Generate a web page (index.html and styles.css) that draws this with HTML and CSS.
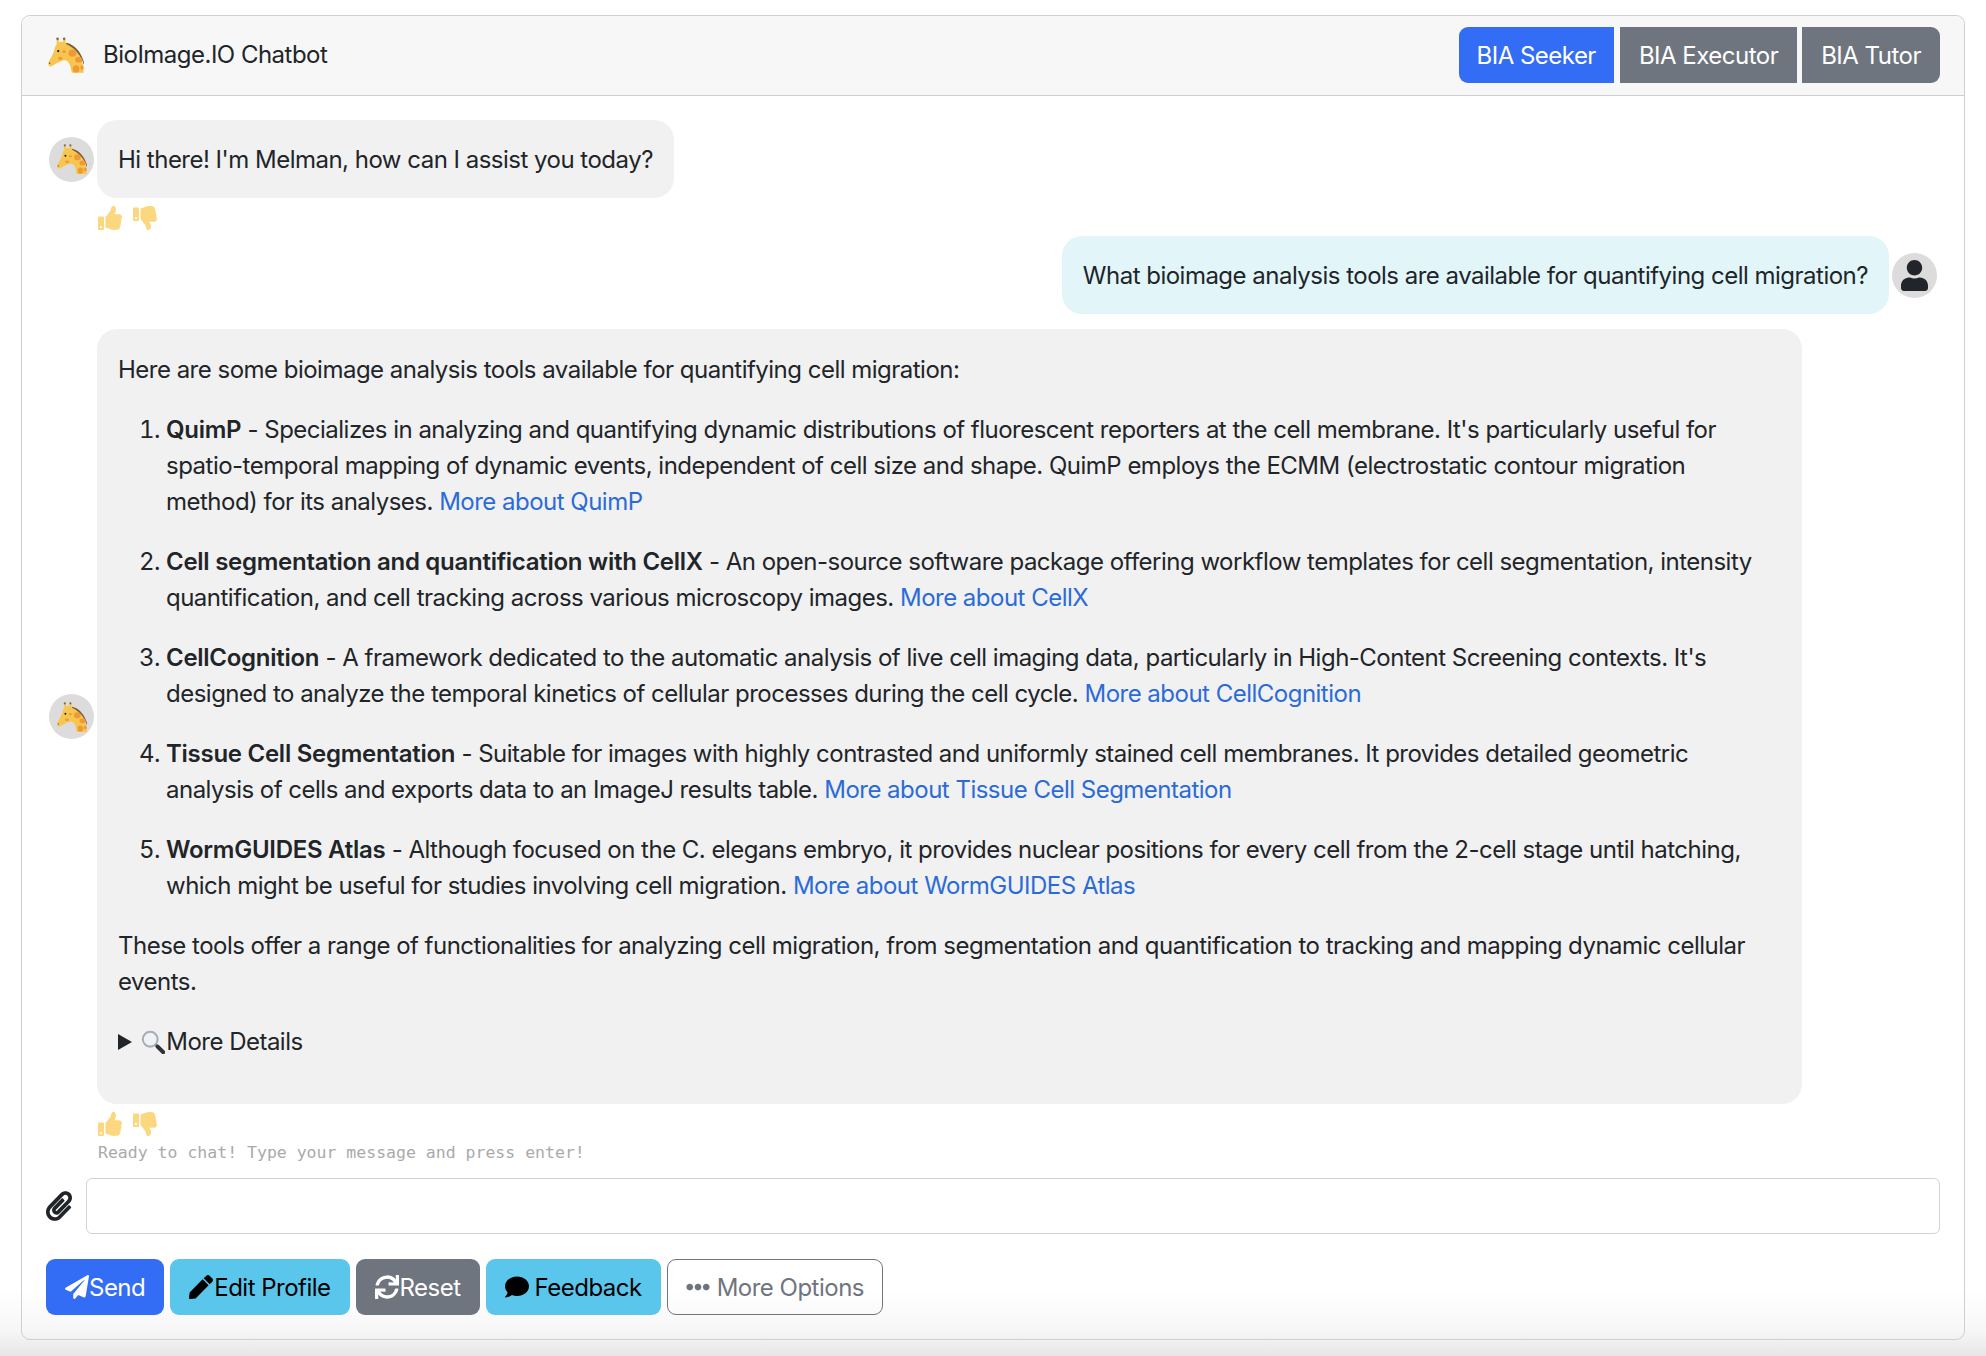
FILE: index.html
```html
<!DOCTYPE html>
<html lang="en">
<head>
  <meta charset="UTF-8">
  <title>BioImage.IO Chatbot</title>
  <link rel="stylesheet" href="styles.css">
</head>
<body>
  <svg class="defs" width="0" height="0">
    <symbol id="giraffe" viewBox="20 24 112 108">
      <path fill="#f8c550" d="M49 32h7v12h-7zM69 32h7v10h-7z"/>
      <circle fill="#8a6a3c" cx="52" cy="29" r="4"/>
      <circle fill="#8a6a3c" cx="72" cy="29" r="4"/>
      <path fill="#f8c550" d="M62 38l6 1 10 3c8 3 16 9 22 16 15 14 30 32 31 74H95c-3-20-7-35-20-38-10 0-25 8-37 16-8 5-15 2-14-8 2-8 14-25 18-38 2-12 8-24 20-26z"/>
      <path fill="#7b5a36" d="M78 41c24 5 44 25 54 59v8c-9-27-26-50-54-63z"/>
      <ellipse fill="#ee9b35" cx="97" cy="72" rx="12" ry="11"/>
      <ellipse fill="#ee9b35" cx="116" cy="92" rx="11" ry="9"/>
      <ellipse fill="#ee9b35" cx="108" cy="120" rx="10" ry="11"/>
      <ellipse fill="#ee9b35" cx="126" cy="116" rx="5" ry="7"/>
      <ellipse fill="#ee9b35" cx="72" cy="68" rx="6" ry="4"/>
      <ellipse fill="#ee9b35" cx="60" cy="88" rx="7" ry="5"/>
      <circle fill="#1d1d1d" cx="54" cy="66" r="3.5"/>
      <circle fill="#5c3d1c" cx="28" cy="103" r="2"/>
    </symbol>
    <symbol id="thumbs-up" viewBox="0 0 512 512">
      <path d="M104 224H24c-13.255 0-24 10.745-24 24v240c0 13.255 10.745 24 24 24h80c13.255 0 24-10.745 24-24V248c0-13.255-10.745-24-24-24zM64 472c-13.255 0-24-10.745-24-24s10.745-24 24-24 24 10.745 24 24-10.745 24-24 24zM384 81.452c0 42.416-25.97 66.208-33.277 94.548h101.723c33.397 0 59.397 27.746 59.553 58.098.084 17.938-7.546 37.249-19.439 49.197l-.11.11c9.836 23.337 8.237 56.037-9.308 79.469 8.681 25.895-.069 57.704-16.382 74.757 4.298 17.598 2.244 32.575-6.148 44.632C440.202 511.587 389.616 512 346.839 512l-2.845-.001c-48.287-.017-87.806-17.598-119.56-31.725-15.957-7.099-36.821-15.887-52.651-16.178-6.54-.12-11.783-5.457-11.783-11.998v-213.77c0-3.2 1.282-6.271 3.558-8.521 39.614-39.144 56.648-80.587 89.117-113.111 14.804-14.832 20.188-37.236 25.393-58.902C282.515 39.293 291.817 0 312 0c24 0 72 8 72 81.452z"/>
    </symbol>
    <symbol id="thumbs-down" viewBox="0 0 512 512">
      <path d="M0 56v240c0 13.255 10.745 24 24 24h80c13.255 0 24-10.745 24-24V56c0-13.255-10.745-24-24-24H24C10.745 32 0 42.745 0 56zm40 200c0-13.255 10.745-24 24-24s24 10.745 24 24-10.745 24-24 24-24-10.745-24-24zm272 256c-20.183 0-29.485-39.293-33.931-57.795-5.206-21.666-10.589-44.07-25.393-58.902-32.469-32.524-49.503-73.967-89.117-113.111a11.98 11.98 0 0 1-3.558-8.521V59.901c0-6.541 5.243-11.878 11.783-11.998 15.831-.29 36.694-9.079 52.651-16.178C256.189 17.598 295.709.017 343.995 0h2.844c42.777 0 93.363.413 113.774 29.737 8.392 12.057 10.446 27.034 6.148 44.632 16.312 17.053 25.063 48.863 16.382 74.757 17.544 23.432 19.143 56.132 9.308 79.469l.11.11c11.893 11.949 19.523 31.259 19.439 49.197-.156 30.352-26.157 58.098-59.553 58.098H350.723C358.03 364.34 384 388.132 384 430.548 384 504 336 512 312 512z"/>
    </symbol>
  </svg>

  <div class="chat-card">
    <header class="card-header">
      <div class="brand">
        <svg class="brand-logo"><use href="#giraffe"/></svg>
        <span>BioImage.IO Chatbot</span>
      </div>
      <div class="assistant-tabs">
        <button class="btn btn-primary tab-first">BIA Seeker</button>
        <button class="btn btn-secondary tab-middle">BIA Executor</button>
        <button class="btn btn-secondary tab-last">BIA Tutor</button>
      </div>
    </header>

    <main class="chat-area">
      <div class="message">
        <div class="avatar"><svg class="avatar-giraffe"><use href="#giraffe"/></svg></div>
        <div class="bubble">Hi there! I'm Melman, how can I assist you today?</div>
      </div>
      <div class="rating">
        <svg class="thumb"><use href="#thumbs-up"/></svg>
        <svg class="thumb"><use href="#thumbs-down"/></svg>
      </div>

      <div class="message message-user">
        <div class="bubble bubble-user">What bioimage analysis tools are available for quantifying cell migration?</div>
        <div class="avatar">
          <svg class="avatar-user" viewBox="0 0 448 512"><path d="M224 256c70.7 0 128-57.3 128-128S294.7 0 224 0 96 57.3 96 128s57.3 128 128 128zm89.6 32h-16.7c-22.2 10.2-46.9 16-72.9 16s-50.6-5.8-72.9-16h-16.7C60.2 288 0 348.2 0 422.4V464c0 26.5 21.5 48 48 48h352c26.5 0 48-21.5 48-48v-41.6c0-74.2-60.2-134.4-134.4-134.4z"/></svg>
        </div>
      </div>

      <div class="message">
        <div class="avatar"><svg class="avatar-giraffe"><use href="#giraffe"/></svg></div>
        <div class="bubble bubble-long">
          <p>Here are some bioimage analysis tools available for quantifying cell migration:</p>
          <ol>
            <li><p><strong>QuimP</strong> - Specializes in analyzing and quantifying dynamic distributions of fluorescent reporters at the cell membrane. It's particularly useful for spatio-temporal mapping of dynamic events, independent of cell size and shape. QuimP employs the ECMM (electrostatic contour migration method) for its analyses. <a href="#">More about QuimP</a></p></li>
            <li><p><strong>Cell segmentation and quantification with CellX</strong> - An open-source software package offering workflow templates for cell segmentation, intensity quantification, and cell tracking across various microscopy images. <a href="#">More about CellX</a></p></li>
            <li><p><strong>CellCognition</strong> - A framework dedicated to the automatic analysis of live cell imaging data, particularly in High-Content Screening contexts. It's designed to analyze the temporal kinetics of cellular processes during the cell cycle. <a href="#">More about CellCognition</a></p></li>
            <li><p><strong>Tissue Cell Segmentation</strong> - Suitable for images with highly contrasted and uniformly stained cell membranes. It provides detailed geometric analysis of cells and exports data to an ImageJ results table. <a href="#">More about Tissue Cell Segmentation</a></p></li>
            <li><p><strong>WormGUIDES Atlas</strong> - Although focused on the C. elegans embryo, it provides nuclear positions for every cell from the 2-cell stage until hatching, which might be useful for studies involving cell migration. <a href="#">More about WormGUIDES Atlas</a></p></li>
          </ol>
          <p>These tools offer a range of functionalities for analyzing cell migration, from segmentation and quantification to tracking and mapping dynamic cellular events.</p>
          <details class="more-details">
            <summary>
              <svg class="magnifier" viewBox="0 0 26 26">
                <circle cx="10" cy="10" r="8" fill="#eef3f7" stroke="#a9adb3" stroke-width="2.2"/>
                <path d="M16 16l2 2" stroke="#8c8f94" stroke-width="3"/>
                <path d="M18 18l6 6" stroke="#2f3338" stroke-width="4.5" stroke-linecap="round"/>
              </svg>More Details
            </summary>
          </details>
        </div>
      </div>
      <div class="rating">
        <svg class="thumb"><use href="#thumbs-up"/></svg>
        <svg class="thumb"><use href="#thumbs-down"/></svg>
      </div>
      <div class="status-line">Ready to chat! Type your message and press enter!</div>
    </main>

    <footer class="composer">
      <div class="input-row">
        <svg class="attach-icon" viewBox="0 0 448 512"><path d="M43.246 466.142c-58.43-60.289-57.341-157.511 1.386-217.581L254.392 34c44.316-45.332 116.351-45.336 160.671 0 43.89 44.894 43.943 117.329 0 162.276L232.214 383.128c-29.855 30.537-78.633 30.111-107.982-.998-28.275-29.97-27.368-77.473 1.452-106.953l143.743-146.835c6.182-6.314 16.312-6.422 22.626-.241l22.861 22.379c6.315 6.182 6.422 16.312.241 22.626L171.427 319.927c-4.932 5.045-5.236 13.428-.648 18.292 4.372 4.634 11.245 4.711 15.688.165l182.849-186.851c19.613-20.062 19.613-52.725-.011-72.798-19.189-19.627-49.957-19.637-69.154 0L90.39 293.295c-34.763 35.56-35.299 93.12-1.191 128.313 34.01 35.093 88.985 35.137 123.058.286l172.06-175.999c6.177-6.319 16.307-6.433 22.626-.256l22.877 22.364c6.319 6.177 6.434 16.307.256 22.626l-172.06 175.998c-59.576 60.938-155.943 60.216-214.77-.485z"/></svg>
        <input class="message-input" type="text">
      </div>
      <div class="action-row">
        <button class="btn btn-primary">
          <svg class="btn-icon" viewBox="0 0 512 512"><path d="M476 3.2L12.5 270.6c-18.1 10.4-15.8 35.6 2.2 43.2L121 358.4l287.3-253.2c5.5-4.9 13.3 2.6 8.6 8.3L176 407v80.5c0 23.6 28.5 32.9 42.5 15.8L282 426l124.6 52.2c14.2 6 30.4-2.9 33-18.2l72-432C515 7.8 493.3-6.8 476 3.2z"/></svg>Send
        </button>
        <button class="btn btn-info">
          <svg class="btn-icon icon-tight" viewBox="0 0 512 512"><path d="M290.74 93.24l128.02 128.02-277.99 277.99-114.14 12.6C11.35 513.54-1.56 500.62.14 485.34l12.7-114.22 277.9-277.88zm207.2-19.06l-60.11-60.11c-18.75-18.75-49.16-18.75-67.91 0l-56.55 56.55 128.02 128.02 56.55-56.55c18.75-18.76 18.75-49.16 0-67.91z"/></svg>Edit Profile
        </button>
        <button class="btn btn-secondary">
          <svg class="btn-icon icon-tight" viewBox="0 0 512 512"><path d="M440.65 12.57l4 82.77A247.16 247.16 0 0 0 255.83 8C134.73 8 33.91 94.92 12.29 209.82A12 12 0 0 0 24.09 224h49.05a12 12 0 0 0 11.67-9.26 175.91 175.91 0 0 1 317-56.94l-101.46-4.86a12 12 0 0 0-12.57 12v47.41a12 12 0 0 0 12 12H500a12 12 0 0 0 12-12V12a12 12 0 0 0-12-12h-47.37a12 12 0 0 0-11.98 12.57zM255.83 432a175.61 175.61 0 0 1-146-77.8l101.8 4.87a12 12 0 0 0 12.57-12v-47.4a12 12 0 0 0-12-12H12a12 12 0 0 0-12 12V500a12 12 0 0 0 12 12h47.35a12 12 0 0 0 12-12.6l-4.15-82.57A247.17 247.17 0 0 0 255.83 504c121.11 0 221.93-86.92 243.55-201.82a12 12 0 0 0-11.8-14.18h-49.05a12 12 0 0 0-11.67 9.26A175.86 175.86 0 0 1 255.83 432z"/></svg>Reset
        </button>
        <button class="btn btn-info">
          <svg class="btn-icon icon-chat" viewBox="0 0 512 512"><path d="M256 32C114.6 32 0 125.1 0 240c0 49.6 21.4 95 57 130.7C44.5 421.1 2.7 466 2.2 466.5c-2.2 2.3-2.8 5.7-1.5 8.7S4.8 480 8 480c66.3 0 116-31.8 140.6-51.4 32.7 12.3 69 19.4 107.4 19.4 141.4 0 256-93.1 256-208S397.4 32 256 32z"/></svg>Feedback
        </button>
        <button class="btn btn-outline">
          <svg class="btn-icon icon-spaced" viewBox="0 0 512 512"><path d="M328 256c0 39.8-32.2 72-72 72s-72-32.2-72-72 32.2-72 72-72 72 32.2 72 72zm104-72c-39.8 0-72 32.2-72 72s32.2 72 72 72 72-32.2 72-72-32.2-72-72-72zm-352 0c-39.8 0-72 32.2-72 72s32.2 72 72 72 72-32.2 72-72-32.2-72-72-72z"/></svg>More Options
        </button>
      </div>
    </footer>
  </div>
</body>
</html>
```

FILE: styles.css
```css
html, body {
  margin: 0;
  height: 100%;
}
body {
  box-sizing: border-box;
  padding: 15px 21px 16px 21px;
  font-family: Inter, "Liberation Sans", sans-serif;
  font-size: 24px;
  line-height: 36px;
  letter-spacing: -0.51px;
  color: #212529;
  background: linear-gradient(to bottom, #ffffff 1290px, #f7f7f7 1330px, #e6e6e6 1356px);
}
.defs {
  position: absolute;
}
.chat-card {
  box-sizing: border-box;
  display: flex;
  flex-direction: column;
  height: 100%;
  border: 1px solid #cfcfcf;
  border-radius: 9px;
}
.card-header {
  display: flex;
  justify-content: space-between;
  align-items: center;
  padding: 11px 24px 12px 25px;
  background-color: #f7f7f7;
  border-bottom: 1px solid #cfcfcf;
  border-radius: 9px 9px 0 0;
}
.brand {
  display: flex;
  align-items: center;
  gap: 19px;
}
.brand-logo {
  width: 37px;
  height: 36px;
}
.assistant-tabs {
  display: flex;
  gap: 5px;
}
.btn {
  display: inline-flex;
  align-items: center;
  box-sizing: border-box;
  height: 56px;
  padding: 2px 18px 0;
  border: 1px solid transparent;
  border-radius: 9px;
  font: inherit;
  letter-spacing: inherit;
}
.btn-primary {
  background-color: #336df5;
  color: #fff;
}
.btn-secondary {
  background-color: #6f757e;
  color: #fff;
}
.btn-info {
  background-color: #5bc6eb;
  color: #000;
}
.btn-outline {
  background: none;
  border-color: #6f757e;
  color: #6f757e;
}
.tab-first {
  margin-right: 1px;
  padding: 2px 17px 0;
  border-radius: 9px 0 0 9px;
}
.tab-middle {
  border-radius: 0;
}
.tab-last {
  border-radius: 0 9px 9px 0;
}
.btn-icon {
  width: 24px;
  height: 24px;
  fill: currentColor;
  margin-top: -2px;
}
.icon-tight {
  margin-right: 1px;
}
.icon-chat {
  margin-right: 6px;
}
.icon-spaced {
  margin-right: 7px;
}

.chat-area {
  flex: 1;
  padding: 24px 27px 0 27px;
}
.message {
  display: flex;
  align-items: center;
  gap: 3px;
}
.message-user {
  justify-content: flex-end;
  margin-bottom: 15px;
}
.avatar {
  flex: none;
  display: flex;
  align-items: center;
  justify-content: center;
  width: 45px;
  height: 45px;
  border-radius: 50%;
  background-color: #dcdcdc;
}
.avatar-giraffe {
  width: 31px;
  height: 30px;
}
.avatar-user {
  width: 27px;
  height: 31px;
  fill: #212529;
}
.bubble {
  padding: 22px 21px 20px;
  border-radius: 20px;
  background-color: #f1f1f1;
}
.bubble-user {
  background-color: #e2f6f9;
}
.bubble-long {
  width: 1705px;
  box-sizing: border-box;
  padding-top: 23px;
  padding-bottom: 20px;
}
.bubble p {
  margin: 0 0 24px;
}
.bubble ol {
  margin: 0;
  padding-left: 48px;
}
.bubble strong {
  font-weight: 600;
  letter-spacing: -0.27px;
}
.bubble a {
  color: #2b6bd8;
  text-decoration: none;
}
.more-details {
  margin-bottom: 24px;
}
.more-details summary {
  list-style: none;
}
.more-details summary::before {
  content: "";
  display: inline-block;
  margin-right: 3px;
  border-left: 14px solid #212529;
  border-top: 8px solid transparent;
  border-bottom: 8px solid transparent;
}
.magnifier {
  width: 24px;
  height: 24px;
  margin-right: 1px;
  vertical-align: -4px;
}
.rating {
  display: flex;
  gap: 11px;
  height: 30px;
  padding: 8px 0 0 49px;
}
.thumb {
  width: 24px;
  height: 24px;
  fill: #fbd780;
}
.status-line {
  margin: -1px 0 0 49px;
  font-family: "DejaVu Sans Mono", monospace;
  font-size: 16.5px;
  line-height: 24px;
  letter-spacing: 0;
  color: #aaa;
}

.composer {
  padding: 0 24px 24px;
}
.input-row {
  display: flex;
  align-items: center;
  gap: 14px;
}
.attach-icon {
  flex: none;
  width: 26px;
  height: 30px;
  fill: #212529;
}
.message-input {
  flex: 1;
  height: 56px;
  box-sizing: border-box;
  border: 1px solid #ced4da;
  border-radius: 6px;
  background: #fff;
}
.action-row {
  display: flex;
  gap: 6px;
  margin-top: 25px;
}
```
